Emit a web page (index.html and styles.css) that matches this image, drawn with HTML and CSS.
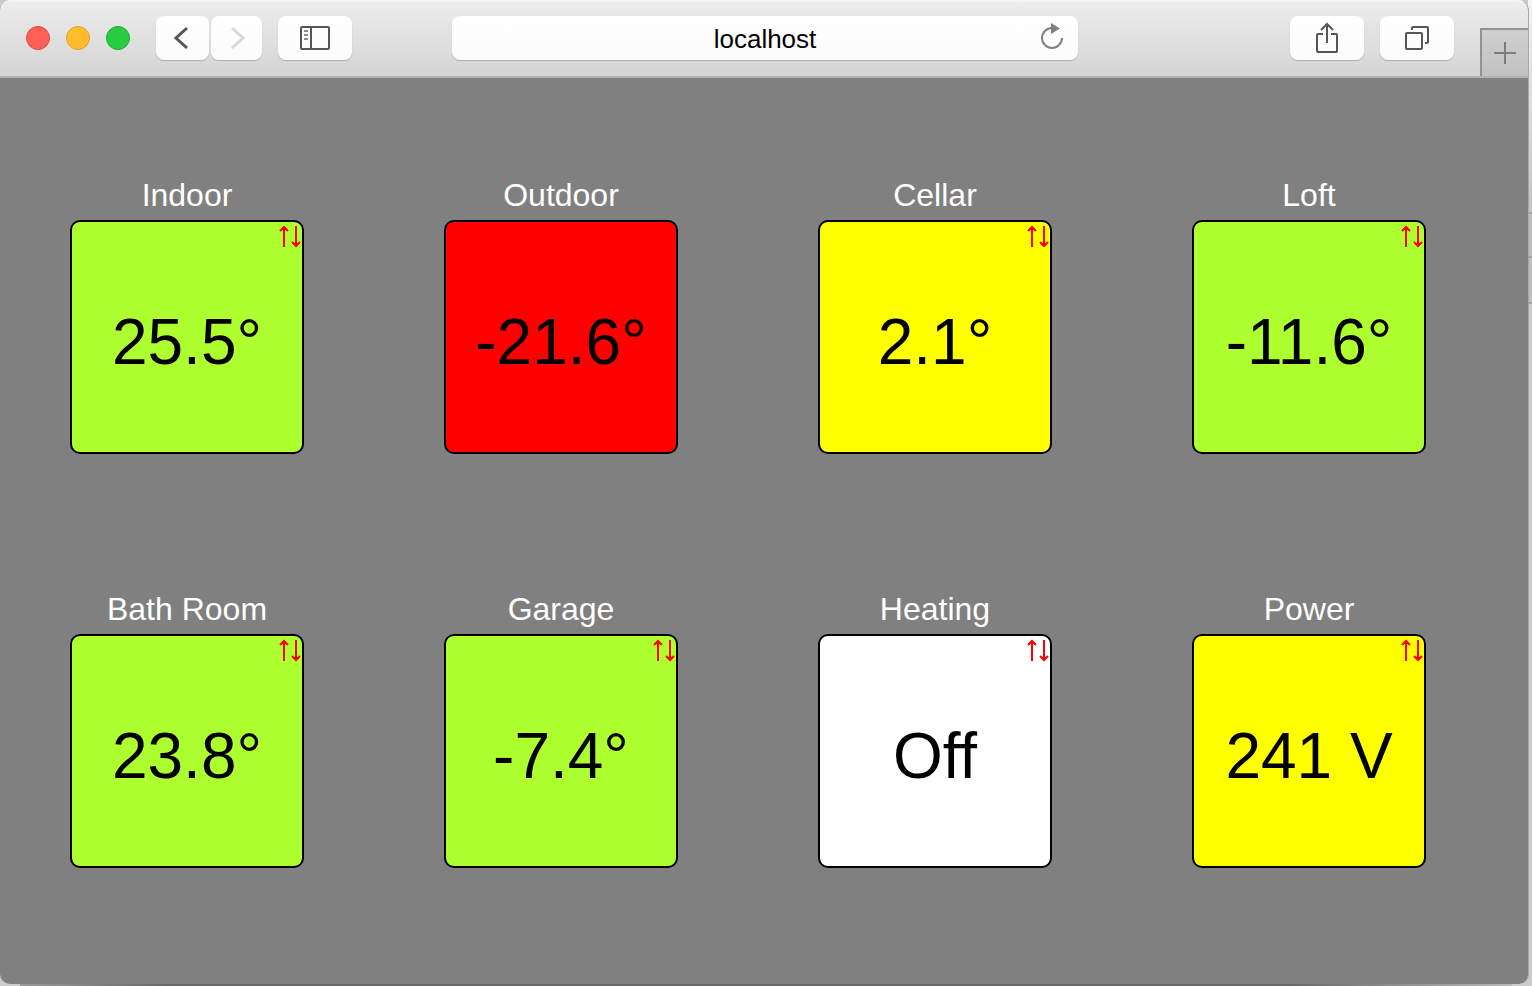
FILE: index.html
```html
<!DOCTYPE html>
<html lang="en">
<head>
<meta charset="utf-8">
<title>localhost</title>
<link rel="stylesheet" href="styles.css">
</head>
<body>
<svg class="sprite">
  <symbol id="updown" viewBox="0 0 24 24">
    <path d="M6 3V23M18 2V22M2 7L6 3L10 7M14 18L18 22L22 18" />
    <path class="head" d="M3 6L6 2L9 6ZM15 19L18 23L21 19Z" />
  </symbol>
</svg>
<div class="window">
  <header class="toolbar">
    <div class="group">
      <div class="lights">
        <button class="light close" aria-label="Close"></button>
        <button class="light minimize" aria-label="Minimize"></button>
        <button class="light zoom" aria-label="Zoom"></button>
      </div>
      <div class="history">
        <button class="tool back" aria-label="Back"><svg width="26" height="28" viewBox="0 0 26 28"><path d="M17 4L6 14L17 24" stroke-width="3"/></svg></button>
        <button class="tool forward" aria-label="Forward" disabled><svg width="24" height="28" viewBox="0 0 24 28"><path d="M7 4L18 14L7 24" stroke-width="3"/></svg></button>
      </div>
      <button class="tool" aria-label="Show sidebar"><svg width="30" height="24" viewBox="0 0 30 24"><rect x="1" y="1" width="28" height="22" rx="1"/><path d="M11 1V23"/><path class="faint" d="M4 5H8M4 9H8M4 13H8"/></svg></button>
    </div>
    <div class="address">
      <input class="field" type="text" value="localhost" aria-label="Address">
      <button class="reload" aria-label="Reload"><svg width="24" height="28" viewBox="0 0 24 28"><path d="M12 6A10 10 0 1 0 22 16" fill="none" stroke="#808080" stroke-width="2"/><path d="M11 1L20 6.500L11 12Z" fill="#808080"/></svg></button>
    </div>
    <div class="group end">
      <button class="tool" aria-label="Share"><svg width="24" height="32" viewBox="0 0 24 32"><path d="M8 12H3Q2 12 2 13V29Q2 30 3 30H21Q22 30 22 29V13Q22 12 21 12H16M12 21V3M6 8L12 2L18 8"/></svg></button>
      <button class="tool" aria-label="Show all tabs"><svg width="26" height="26" viewBox="0 0 26 26"><rect x="2" y="8" width="16" height="16" rx="1"/><path d="M8 5V3Q8 2 9 2H23Q24 2 24 3V17Q24 18 23 18H21"/></svg></button>
      <button class="new-tab" aria-label="New tab"><svg width="22" height="22" viewBox="0 0 22 22"><path d="M11 0V22M0 11H22"/></svg></button>
    </div>
  </header>
  <main class="board">
    <section class="sensor"><h2 class="name">Indoor</h2><div class="tile ok"><svg class="status"><use href="#updown"/></svg><span class="value">25.5°</span></div></section>
    <section class="sensor"><h2 class="name">Outdoor</h2><div class="tile alarm"><span class="value">-21.6°</span></div></section>
    <section class="sensor"><h2 class="name">Cellar</h2><div class="tile warn"><svg class="status"><use href="#updown"/></svg><span class="value">2.1°</span></div></section>
    <section class="sensor"><h2 class="name">Loft</h2><div class="tile ok"><svg class="status"><use href="#updown"/></svg><span class="value">-11.6°</span></div></section>
    <section class="sensor"><h2 class="name">Bath Room</h2><div class="tile ok"><svg class="status"><use href="#updown"/></svg><span class="value">23.8°</span></div></section>
    <section class="sensor"><h2 class="name">Garage</h2><div class="tile ok"><svg class="status"><use href="#updown"/></svg><span class="value">-7.4°</span></div></section>
    <section class="sensor"><h2 class="name">Heating</h2><div class="tile off"><svg class="status"><use href="#updown"/></svg><span class="value">Off</span></div></section>
    <section class="sensor"><h2 class="name">Power</h2><div class="tile warn"><svg class="status"><use href="#updown"/></svg><span class="value">241 V</span></div></section>
  </main>
</div>
</body>
</html>
```
FILE: styles.css
```css
* { box-sizing: border-box; }

body {
  margin: 0;
  min-height: 100vh;
  display: flex;
  padding: 0 3px 2px 0;
  font-family: "Liberation Sans", Arial, sans-serif;
  background:
    linear-gradient(#a2a2a2, #a2a2a2) 100% 212px / 4px 2px no-repeat,
    linear-gradient(#a2a2a2, #a2a2a2) 100% 256px / 4px 2px no-repeat,
    linear-gradient(#a2a2a2, #a2a2a2) 100% 302px / 4px 2px no-repeat,
    linear-gradient(#bebebe, #bebebe) 100% 212px / 4px 90px no-repeat,
    linear-gradient(#f4f4f4, #c4c4c4) 100% 0 / 4px 212px no-repeat,
    linear-gradient(90deg, #9a9a9a, #686868 10%, #686868 85%, #b8b8b8) 20px 100% / calc(100% - 40px) 2px no-repeat,
    #cccccc;
}

button {
  padding: 0;
  border: 0;
  background: none;
  display: flex;
  align-items: center;
  justify-content: center;
}

.sprite { display: none; }

.window {
  flex: 1;
  display: flex;
  flex-direction: column;
  border-right: 1px solid #a8a8a8;
  border-radius: 10px;
  overflow: hidden;
  background: #808080;
}

.toolbar {
  height: 78px;
  display: grid;
  grid-template-columns: 1fr minmax(200px, 626px) 1fr;
  padding-left: 2px;
  border-bottom: 2px solid #b2b2b2;
  background: linear-gradient(#ededed, #d4d4d4);
  box-shadow: inset 0 2px 0 #f5f5f5;
}

.group {
  display: flex;
  align-items: center;
  gap: 16px;
  padding-left: 24px;
}

.end {
  justify-content: flex-end;
  padding-left: 0;
}

.lights {
  display: flex;
  gap: 16px;
  margin-right: 10px;
}

.light {
  width: 24px;
  height: 24px;
  border-radius: 50%;
  border: 1px solid;
}

.close { background: #ff5f57; border-color: #e2463f; }
.minimize { background: #ffbd2e; border-color: #e0a023; }
.zoom { background: #28cd41; border-color: #14ae2b; }

.history {
  display: flex;
  gap: 2px;
}

.tool,
.field {
  height: 44px;
  border-radius: 8px;
  background: linear-gradient(#ffffff, #fbfbfb);
  box-shadow: 0 1px 1px #acacac;
}

.tool { width: 74px; }
.back { width: 53px; }
.forward { width: 51px; }

.tool svg {
  fill: none;
  stroke: #555555;
  stroke-width: 2;
}

.tool .faint { stroke: #8c8c8c; }
.forward svg { stroke: #d8d8d8; }

.address {
  position: relative;
  display: flex;
  align-items: center;
}

.field {
  width: 100%;
  border: 0;
  padding: 3px 40px 0;
  text-align: center;
  font: 26px "Liberation Sans", Arial, sans-serif;
  color: #000000;
}

.reload {
  position: absolute;
  right: 14px;
  top: 22px;
}

.new-tab {
  align-self: flex-end;
  width: 48px;
  height: 48px;
  margin-left: 10px;
  border-top: 2px solid #929292;
  border-left: 2px solid #929292;
  background: linear-gradient(#d0d0d0, #c1c1c1);
}

.new-tab svg {
  fill: none;
  stroke: #7c7c7c;
  stroke-width: 2;
}

.board {
  flex: 1;
  display: flex;
  flex-wrap: wrap;
  align-content: flex-start;
  gap: 136px 140px;
  padding: 98px 70px 70px;
}

.sensor { width: 234px; }

.name {
  margin: 0 0 6px;
  font-size: 32px;
  line-height: 38px;
  font-weight: 400;
  text-align: center;
  color: #ffffff;
}

.tile {
  position: relative;
  height: 234px;
  display: flex;
  align-items: center;
  justify-content: center;
  padding-top: 10px;
  border: 2px solid #000000;
  border-radius: 10px;
}

.ok { background: #adff2f; }
.alarm { background: #ff0000; }
.warn { background: #ffff00; }
.off { background: #ffffff; }

.value {
  font-size: 64px;
  line-height: 72px;
  color: #000000;
}

.status {
  position: absolute;
  top: 2px;
  right: 0;
  width: 24px;
  height: 24px;
  fill: none;
  stroke: #ff0000;
  stroke-width: 2;
}

.head {
  fill: #ff0000;
  stroke: none;
}
```
